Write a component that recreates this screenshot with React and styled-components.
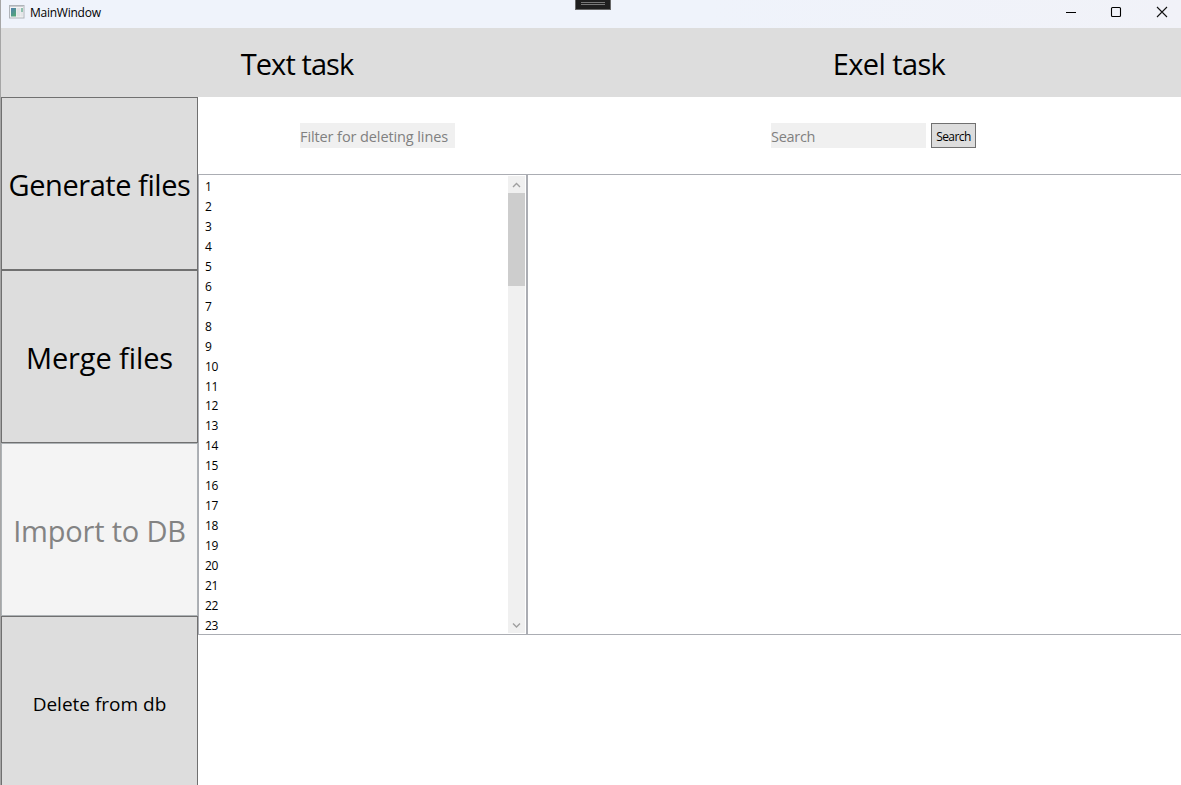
import React from "react";
import styled, { createGlobalStyle } from "styled-components";

const GlobalStyle = createGlobalStyle`
  * { box-sizing: border-box; }
  body {
    margin: 0;
    overflow: hidden;
    background: #fff;
    color: #000;
    font-family: "Segoe UI", "Open Sans", "Noto Sans", sans-serif;
    font-size: 12px;
  }
`;

const Window = styled.div`
  display: flex;
  flex-direction: column;
  width: 1181px;
  height: 785px;
  overflow: hidden;
  border-left: 1px solid #a6a6a6;
`;

const TitleBar = styled.header`
  position: relative;
  display: flex;
  flex: 0 0 28px;
  align-items: center;
  background: linear-gradient(90deg, #eff3fb 60%, #f1f2f8);
  padding: 0 13px 4px 8px;
`;

const Title = styled.span`
  flex: 1;
  margin: 2px 0 0 5px;
  line-height: 16px;
  font-size: 12px;
  letter-spacing: -0.25px;
`;

const WindowControls = styled.div`
  display: flex;
  gap: 34px;
`;

const DebugHandle = styled.div`
  position: absolute;
  left: 574px;
  top: 0;
  width: 36px;
  height: 10px;
  padding: 2px 5px;
  background: #1f1f1f;
  border: 1px solid #686868;
  border-top: 0;
`;

const Grip = styled.div`
  height: 3px;
  border: solid #777;
  border-width: 1px 0;
`;

const TabRow = styled.nav`
  display: grid;
  flex: 0 0 69px;
  grid-template-columns: 592px 592px;
  background: #ddd;
`;

const Tab = styled.div`
  display: flex;
  align-items: center;
  justify-content: center;
  padding-top: 1px;
  font-size: 29px;
  letter-spacing: ${(p) => p.$spacing}px;
`;

const Body = styled.div`
  display: flex;
  flex: 1;
  min-height: 0;
`;

const Sidebar = styled.aside`
  flex: 0 0 197px;
`;

const SideButton = styled.button`
  display: flex;
  align-items: center;
  justify-content: center;
  width: 197px;
  height: 173px;
  padding: ${(p) => p.$top}px 0 0;
  border: 1px solid ${(p) => (p.disabled ? "#adb2b5" : "#707070")};
  background: ${(p) => (p.disabled ? "#f4f4f4" : "#ddd")};
  color: ${(p) => (p.disabled ? "#838383" : "#000")};
  font-family: inherit;
  font-size: ${(p) => p.$size}px;
  letter-spacing: ${(p) => p.$spacing}px;
  white-space: nowrap;
`;

const Content = styled.main`
  flex: 1;
  min-width: 0;
`;

const ToolRow = styled.div`
  display: flex;
  height: 77px;
  padding: 26px 0 0 102px;
`;

const Field = styled.div`
  width: 155px;
  height: 25px;
  padding-top: 2px;
  background: #f0f0f0;
  color: #808080;
  font-size: 14.5px;
  line-height: 23px;
  letter-spacing: ${(p) => p.$spacing}px;
  white-space: nowrap;
`;

const SearchGroup = styled.div`
  display: flex;
  gap: 5px;
  margin-left: 316px;
`;

const SearchButton = styled.button`
  width: 45px;
  height: 25px;
  padding: 2px 0 0;
  border: 1px solid #707070;
  background: #ddd;
  color: #000;
  font-family: inherit;
  font-size: 12px;
  letter-spacing: -0.55px;
`;

const Lists = styled.div`
  display: grid;
  grid-template-columns: 329px 660px;
  height: 461px;
`;

const ListBox = styled.div`
  display: flex;
  justify-content: space-between;
  padding: 1px;
  border: 1px solid #abadb3;
  overflow: hidden;
`;

const Items = styled.ol`
  margin: 1px 0 0;
  padding: 0 0 0 5px;
  list-style: none;
`;

const Item = styled.li`
  height: 19.96px;
  line-height: 20px;
  font-size: 12px;
  letter-spacing: -0.4px;
`;

const ScrollBar = styled.div`
  display: flex;
  flex-direction: column;
  width: 17px;
  background: #f0f0f0;
`;

const Arrow = styled.svg`
  display: block;
  flex: 0 0 17px;
  width: 17px;
  height: 17px;
`;

const Track = styled.div`
  flex: 1;
`;

const Thumb = styled.div`
  height: 93px;
  background: #cdcdcd;
`;

const ACTIONS = [
  { label: "Generate files", size: 29, spacing: -0.45, top: 2 },
  { label: "Merge files", size: 29, spacing: -0.1, top: 2 },
  { label: "Import to DB", size: 29, spacing: -0.2, top: 2, disabled: true },
  { label: "Delete from db", size: 19, spacing: 0, top: 3 },
];

const LINES = Array.from({ length: 23 }, (_, i) => i + 1);

const AppIcon = () => (
  <svg width="16" height="14" viewBox="0 0 16 14">
    <defs>
      <linearGradient id="pane" x1="0" y1="0" x2="0.6" y2="1">
        <stop offset="0" stopColor="#4f7fae" />
        <stop offset="1" stopColor="#53a579" />
      </linearGradient>
    </defs>
    <rect x="0.5" y="0.5" width="14.5" height="12.5" fill="#f3f4f5" stroke="#b0b4b9" />
    <path d="M1 1.5H14.5" stroke="#c9ccd0" />
    <rect x="2" y="3" width="5" height="8.5" fill="url(#pane)" />
    <rect x="7.5" y="3" width="4" height="8.5" fill="#e1e3e5" />
    <rect x="12" y="3" width="2" height="4" fill="#8fc0ae" />
    <rect x="12" y="7" width="2" height="4.5" fill="#e4e6e8" />
  </svg>
);

export default function App() {
  return (
    <>
      <GlobalStyle />
      <Window>
        <TitleBar>
          <AppIcon />
          <Title>MainWindow</Title>
          <WindowControls>
            <svg width="12" height="12" viewBox="0 0 12 12">
              <path d="M2 6.5H12" stroke="#000" />
            </svg>
            <svg width="12" height="12" viewBox="0 0 12 12">
              <rect x="1.5" y="1.5" width="9" height="9" rx="1" fill="none" stroke="#000" strokeWidth="1.1" />
            </svg>
            <svg width="12" height="12" viewBox="0 0 12 12">
              <path d="M1 1L11 11M11 1L1 11" stroke="#111" strokeWidth="1.1" />
            </svg>
          </WindowControls>
          <DebugHandle>
            <Grip />
          </DebugHandle>
        </TitleBar>
        <TabRow>
          <Tab $spacing={-0.9}>Text task</Tab>
          <Tab $spacing={-0.6}>Exel task</Tab>
        </TabRow>
        <Body>
          <Sidebar>
            {ACTIONS.map((a) => (
              <SideButton key={a.label} disabled={a.disabled} $size={a.size} $spacing={a.spacing} $top={a.top}>
                {a.label}
              </SideButton>
            ))}
          </Sidebar>
          <Content>
            <ToolRow>
              <Field $spacing={-0.1}>Filter for deleting lines</Field>
              <SearchGroup>
                <Field $spacing={-0.3}>Search</Field>
                <SearchButton>Search</SearchButton>
              </SearchGroup>
            </ToolRow>
            <Lists>
              <ListBox>
                <Items>
                  {LINES.map((n) => (
                    <Item key={n}>{n}</Item>
                  ))}
                </Items>
                <ScrollBar>
                  <Arrow viewBox="0 0 17 17">
                    <path d="M5 11L8.5 7.5L12 11" fill="none" stroke="#a0a0a0" strokeWidth="1.4" />
                  </Arrow>
                  <Track>
                    <Thumb />
                  </Track>
                  <Arrow viewBox="0 0 17 17">
                    <path d="M5 7.5L8.5 11L12 7.5" fill="none" stroke="#a0a0a0" strokeWidth="1.4" />
                  </Arrow>
                </ScrollBar>
              </ListBox>
              <ListBox />
            </Lists>
          </Content>
        </Body>
      </Window>
    </>
  );
}
